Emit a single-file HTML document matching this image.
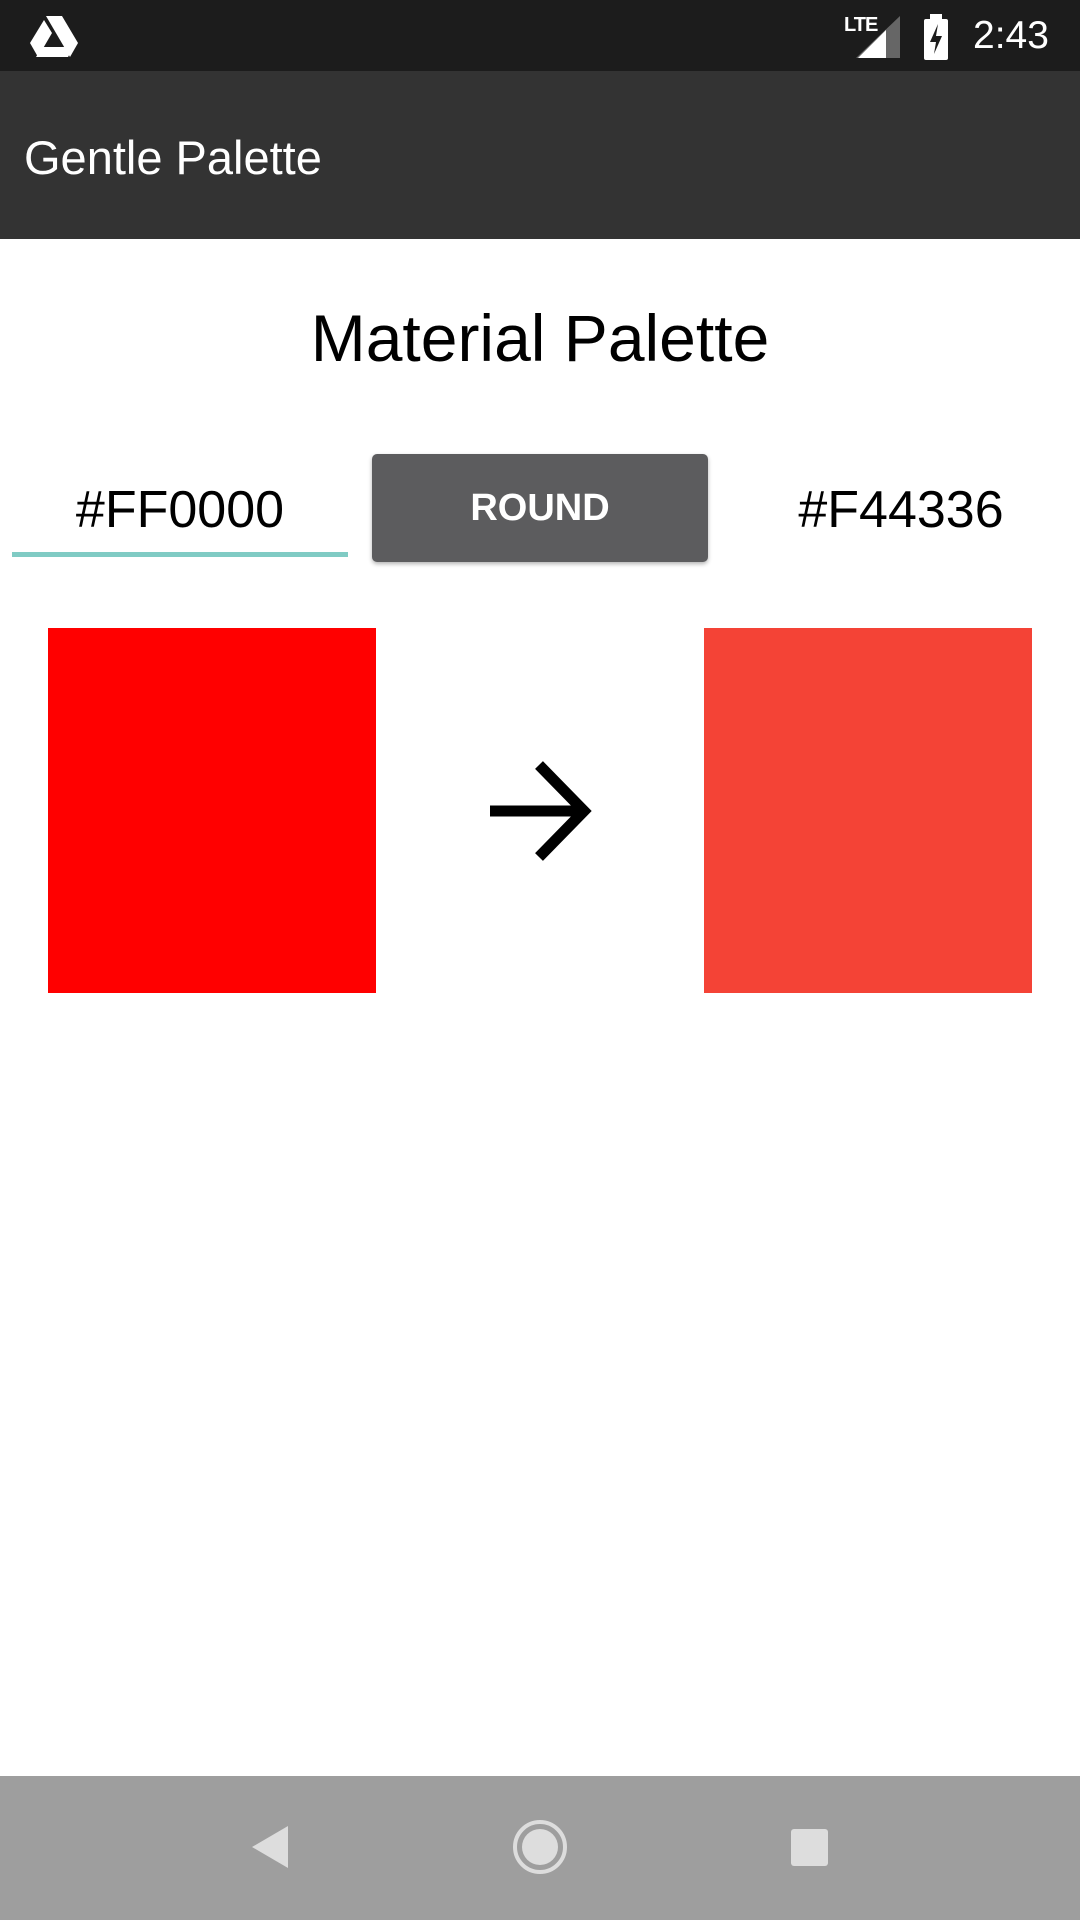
<!DOCTYPE html>
<html><head><meta charset="utf-8"><style>
*{margin:0;padding:0;box-sizing:border-box}
body{width:1080px;height:1920px;position:relative;background:#fff;font-family:"Liberation Sans",Roboto,sans-serif;overflow:hidden}
.abs{position:absolute}
</style></head><body>
<div class="abs" style="left:0;top:0;width:1080px;height:71px;background:#1c1c1c"></div>
<svg class="abs" style="left:30px;top:16px" width="48" height="42" viewBox="0 0 48 42">
<polygon points="16,0 32,0 48,27 40,41" fill="#fff"/>
<polygon points="14,4 22,17 8,41 0,27" fill="#fff"/>
<polygon points="12,31 44,31 38,41 6,41" fill="#fff"/>
</svg>
<div class="abs" style="left:844px;top:14px;color:#fff;font-size:20px;font-weight:bold;letter-spacing:-1px">LTE</div>
<svg class="abs" style="left:856px;top:16px" width="44" height="42"><polygon points="44,0 44,42 0,42" fill="#666"/><polygon points="30,14 30,42 2,42" fill="#fff"/></svg>
<svg class="abs" style="left:922px;top:14px" width="28" height="46"><rect x="8" y="0" width="12" height="6" fill="#fff"/><rect x="2" y="5" width="24" height="41" rx="2" fill="#fff"/><polygon points="16,10 8,28 14,28 12,40 20,22 14,22" fill="#1c1c1c"/></svg>
<div class="abs" style="left:973px;top:14px;color:#fff;font-size:39px">2:43</div>

<div class="abs" style="left:0;top:71px;width:1080px;height:168px;background:#333"></div>
<div class="abs" style="left:24px;top:130px;color:#fff;font-size:47px">Gentle Palette</div>

<div class="abs" style="left:0;top:300px;width:1080px;text-align:center;font-size:66px;color:#000">Material Palette</div>

<div class="abs" style="left:12px;top:480px;width:336px;text-align:center;font-size:52px;color:#000">#FF0000</div>
<div class="abs" style="left:12px;top:552px;width:336px;height:5px;background:#80cbc4"></div>
<div class="abs" style="left:372px;top:454px;width:336px;height:108px;background:#5c5c5e;border-radius:5px;box-shadow:0 2px 4px rgba(0,0,0,.3);color:#fff;font-size:38px;font-weight:bold;text-align:center;line-height:108px">ROUND</div>
<div class="abs" style="left:732px;top:480px;width:338px;text-align:center;font-size:52px;color:#000">#F44336</div>

<div class="abs" style="left:48px;top:628px;width:328px;height:365px;background:#ff0000"></div>
<div class="abs" style="left:704px;top:628px;width:328px;height:365px;background:#f44336"></div>
<svg class="abs" style="left:488px;top:760px" width="104" height="102" viewBox="0 0 104 102">
<path d="M2 51H96M51 5L96 51L51 97" stroke="#000" stroke-width="11" fill="none"/>
</svg>

<div class="abs" style="left:0;top:1776px;width:1080px;height:144px;background:#9e9e9e"></div>
<svg class="abs" style="left:250px;top:1826px" width="40" height="42"><polygon points="38,0 38,42 2,21" fill="#ddd"/></svg>
<svg class="abs" style="left:512px;top:1819px" width="56" height="56"><circle cx="28" cy="28" r="25" stroke="#ddd" stroke-width="4" fill="none"/><circle cx="28" cy="28" r="18" fill="#ddd"/></svg>
<div class="abs" style="left:791px;top:1829px;width:37px;height:37px;background:#ddd;border-radius:3px"></div>
</body></html>
